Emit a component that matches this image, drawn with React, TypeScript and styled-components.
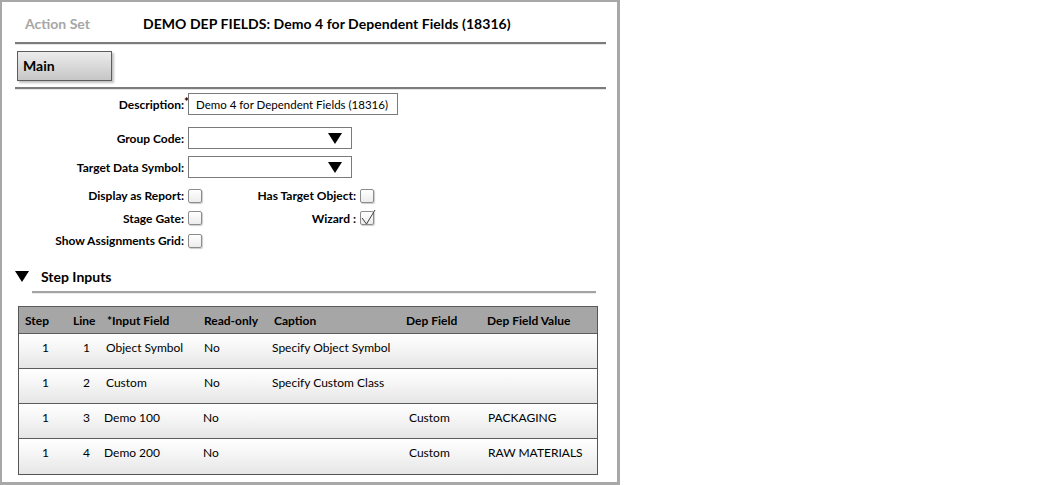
import React from 'react'
import styled, { createGlobalStyle } from 'styled-components'

const GlobalStyle = createGlobalStyle`
  html, body {
    margin: 0;
    padding: 0;
    background: #fff;
  }
  body {
    font-family: Lato, 'Open Sans', 'Liberation Sans', sans-serif;
    color: #000;
  }
`

const Frame = styled.div`
  box-sizing: border-box;
  margin: 0;
  width: 620px;
  height: 485px;
  border: 2px solid #a8a8a8;
  border-width: 2px 3px 3px 2px;
  display: flex;
  flex-direction: column;
`

const Header = styled.header`
  height: 40px;
  padding-top: 3px;
  box-sizing: border-box;
  display: flex;
  align-items: center;
  font-size: 14px;
  font-weight: bold;
`

const Kind = styled.span`
  width: 118px;
  padding-left: 23px;
  color: #a6a6a6;
`

const Title = styled.span`
  letter-spacing: 0.05px;
`

const Divider = styled.div`
  margin: 0 11px 0 13px;
  height: 2px;
  background: #7c7c7c;
  border-bottom: 1px solid #e4e4e4;
`

const TabBar = styled.div`
  height: 42px;
  box-sizing: border-box;
  padding: 6px 0 0 15px;
`

const Tab = styled.button<{ $active?: boolean }>`
  width: 95px;
  height: 30px;
  box-sizing: border-box;
  border: 1px solid #5c5c5c;
  background: ${p => (p.$active ? 'linear-gradient(#ececec, #c6c6c6)' : '#f4f4f4')};
  box-shadow: 2px 2px 2px rgba(0, 0, 0, 0.25);
  text-align: left;
  padding: 0 0 2px 5px;
  font-family: inherit;
  font-size: 14px;
  font-weight: bold;
  color: #000;
`

const Form = styled.div`
  display: flex;
  flex-direction: column;
`

const FieldRow = styled.div<{ $top: number }>`
  display: grid;
  grid-template-columns: 182px 4px auto;
  align-items: center;
  margin-top: ${p => p.$top}px;
`

const Label = styled.label`
  text-align: right;
  font-size: 12px;
  font-weight: bold;
`

const Required = styled.span`
  font-size: 12px;
  font-weight: bold;
  align-self: start;
  margin-top: 1px;
`

const TextBox = styled.div<{ $width: number }>`
  width: ${p => p.$width}px;
  height: 22px;
  box-sizing: border-box;
  border: 1px solid #7a7a7a;
  display: flex;
  align-items: center;
  justify-content: space-between;
  padding: 0 9px 0 7px;
  font-size: 11.5px;
`

const Arrow = () => (
  <svg width="14" height="11" viewBox="0 0 14 11">
    <polygon points="0,0 14,0 7,11" fill="#000" />
  </svg>
)

const CheckGrid = styled.div`
  display: grid;
  grid-template-columns: 182px 14px 150px 14px;
  column-gap: 4px;
  row-gap: 7.5px;
  align-items: center;
  margin-top: 10px;
`

const Box = styled.span`
  width: 14px;
  height: 14px;
  box-sizing: border-box;
  border: 1px solid #8c8c8c;
  border-radius: 2px;
  background: linear-gradient(#ffffff, #ececec);
  box-shadow: 1px 1px 1px rgba(0, 0, 0, 0.2);
  position: relative;
  svg {
    position: absolute;
    left: 0;
    top: -3px;
  }
`

const Check = ({ checked }: { checked?: boolean }) => (
  <Box>
    {checked && (
      <svg width="15" height="16" viewBox="0 0 15 16">
        <polyline points="1,9 5.5,15 14,1" fill="none" stroke="#3c3c3c" strokeWidth="1" />
      </svg>
    )}
  </Box>
)

const SectionHead = styled.div`
  display: flex;
  align-items: center;
  gap: 12px;
  height: 18px;
  margin-top: 19px;
  padding-left: 13px;
  font-size: 14px;
  font-weight: bold;
`

const SectionRule = styled.div`
  margin: 6px 0 0 30px;
  width: 564px;
  height: 2px;
  background: #a4a4a4;
  border-bottom: 1px solid #ececec;
`

const Table = styled.div`
  margin: 12px 0 0 16px;
  width: 580px;
  box-sizing: border-box;
  border: 1px solid #555;
  border-top: 0;
`

const cols = '48px 34px 98px 70px 132px 82px 1fr'

const HeadRow = styled.div`
  display: grid;
  grid-template-columns: ${cols};
  height: 28px;
  box-sizing: border-box;
  align-items: center;
  background: #a6a6a6;
  border-top: 1px solid #5c5c5c;
  border-bottom: 1px solid #5c5c5c;
  font-size: 12px;
  font-weight: bold;
`

const HeadCell = styled.span<{ $pad: number }>`
  padding-left: ${p => p.$pad}px;
  white-space: nowrap;
`

const Row = styled.div`
  display: grid;
  grid-template-columns: ${cols};
  height: 35px;
  box-sizing: border-box;
  padding-top: 7px;
  line-height: 14px;
  background: linear-gradient(#ffffff, #f6f6f6 40%, #e6e6e6);
  border-bottom: 1px solid #5c5c5c;
  font-size: 12px;
  &:last-child {
    border-bottom: 0;
  }
`

const Cell = styled.span<{ $pad?: number; $right?: number }>`
  white-space: nowrap;
  padding-left: ${p => p.$pad ?? 0}px;
  padding-right: ${p => p.$right ?? 0}px;
  text-align: ${p => (p.$right !== undefined ? 'right' : 'left')};
`

const headings: [string, number][] = [
  ['Step', 6],
  ['Line', 6],
  ['*Input Field', 6],
  ['Read-only', 5],
  ['Caption', 5],
  ['Dep Field', 5],
  ['Dep Field Value', 4],
]

const rows = [
  { step: 1, line: 1, field: 'Object Symbol', ro: 'No', caption: 'Specify Object Symbol', dep: '', value: '' },
  { step: 1, line: 2, field: 'Custom', ro: 'No', caption: 'Specify Custom Class', dep: '', value: '' },
  { step: 1, line: 3, field: 'Demo 100', ro: 'No', caption: '', dep: 'Custom', value: 'PACKAGING' },
  { step: 1, line: 4, field: 'Demo 200', ro: 'No', caption: '', dep: 'Custom', value: 'RAW MATERIALS' },
]

export default function App() {
  return (
    <>
      <GlobalStyle />
      <Frame>
        <Header>
          <Kind>Action Set</Kind>
          <Title>DEMO DEP FIELDS: Demo 4 for Dependent Fields (18316)</Title>
        </Header>
        <Divider />
        <TabBar>
          <Tab $active>Main</Tab>
        </TabBar>
        <Divider />

        <Form>
          <FieldRow $top={3}>
            <Label>Description:</Label>
            <Required>*</Required>
            <TextBox $width={210}>Demo 4 for Dependent Fields (18316)</TextBox>
          </FieldRow>
          <FieldRow $top={12}>
            <Label>Group Code:</Label>
            <span />
            <TextBox $width={164}>
              <span />
              <Arrow />
            </TextBox>
          </FieldRow>
          <FieldRow $top={7}>
            <Label>Target Data Symbol:</Label>
            <span />
            <TextBox $width={164}>
              <span />
              <Arrow />
            </TextBox>
          </FieldRow>

          <CheckGrid>
            <Label>Display as Report:</Label>
            <Check />
            <Label>Has Target Object:</Label>
            <Check />
            <Label>Stage Gate:</Label>
            <Check />
            <Label>Wizard :</Label>
            <Check checked />
            <Label>Show Assignments Grid:</Label>
            <Check />
          </CheckGrid>
        </Form>

        <SectionHead>
          <Arrow />
          <span>Step Inputs</span>
        </SectionHead>
        <SectionRule />

        <Table>
          <HeadRow>
            {headings.map(([h, pad]) => (
              <HeadCell key={h} $pad={pad}>
                {h}
              </HeadCell>
            ))}
          </HeadRow>
          {rows.map(r => (
            <Row key={r.line}>
              <Cell $right={18}>{r.step}</Cell>
              <Cell $right={11}>{r.line}</Cell>
              <Cell $pad={r.line > 2 ? 3 : 5}>{r.field}</Cell>
              <Cell $pad={r.line > 2 ? 4 : 5}>{r.ro}</Cell>
              <Cell $pad={3}>{r.caption}</Cell>
              <Cell $pad={8}>{r.dep}</Cell>
              <Cell $pad={5}>{r.value}</Cell>
            </Row>
          ))}
        </Table>
      </Frame>
    </>
  )
}
